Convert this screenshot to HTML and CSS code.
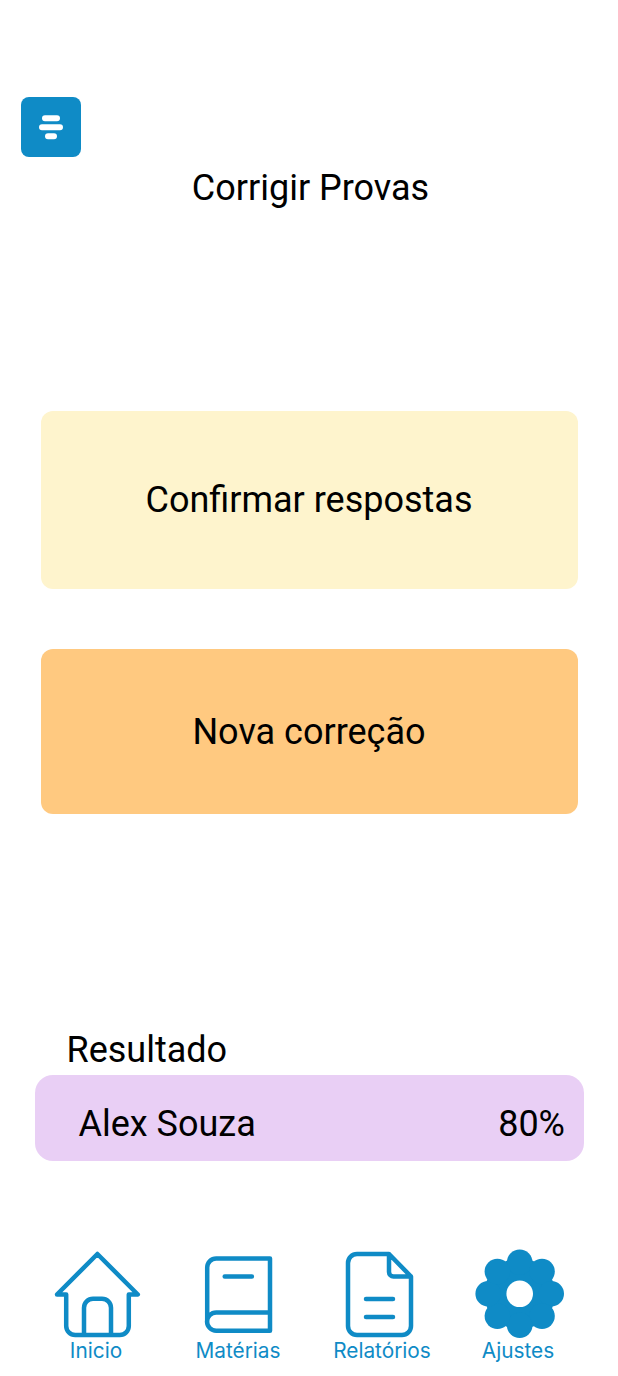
FILE: index.html
```html
<!DOCTYPE html>
<html lang="pt-BR">
<head>
<meta charset="utf-8">
<title>Corrigir Provas</title>
<link rel="stylesheet" href="styles.css">
</head>
<body>
<main class="screen">
  <header class="header">
    <button class="menu" aria-label="Menu">
      <svg class="menu-icon" viewBox="0 0 60 60"><path d="M24 21.3h12M21 30.3h18M27 39.3h6"/></svg>
    </button>
    <h1 class="title">Corrigir Provas</h1>
  </header>
  <section class="actions">
    <button class="action action-confirm">Confirmar respostas</button>
    <button class="action action-new">Nova correção</button>
  </section>
  <section class="results">
    <h2 class="results-title">Resultado</h2>
    <div class="result"><span>Alex Souza</span><span>80%</span></div>
  </section>
  <nav class="nav">
    <a class="nav-item">
      <svg class="nav-icon" viewBox="0 0 100 95"><path d="M20.2 49.5H11L51.4 9 91.8 49.5H82.8V81a9 9 0 0 1-9 9H29.2a9 9 0 0 1-9-9ZM38 90V62.7a9 9 0 0 1 9-9h9a9 9 0 0 1 9 9V90"/></svg>
      <span>Inicio</span>
    </a>
    <a class="nav-item">
      <svg class="nav-icon" viewBox="0 0 100 95"><path d="M19.2 76.5V22.4a9 9 0 0 1 9-9H82V85.7H28.2a9.15 9.15 0 0 1 0-18.3H82M36.7 31.5h27.2"/></svg>
      <span>Matérias</span>
    </a>
    <a class="nav-item">
      <svg class="nav-icon" viewBox="0 0 100 95"><path d="M57 9H25a9 9 0 0 0-9 9v63a9 9 0 0 0 9 9h45a9 9 0 0 0 9-9V31.5ZM57 9v18a4.5 4.5 0 0 0 4.5 4.5H79M34 54h27M34 72h27"/></svg>
      <span>Relatórios</span>
    </a>
    <a class="nav-item">
      <svg class="nav-icon nav-icon-solid" viewBox="0 0 100 95">
        <circle cx="51.7" cy="48.8" r="35.4"/>
        <circle cx="51.7" cy="17.3" r="12.8"/><circle cx="74" cy="26.5" r="12.8"/>
        <circle cx="83.2" cy="48.8" r="12.8"/><circle cx="74" cy="71.1" r="12.8"/>
        <circle cx="51.7" cy="80.3" r="12.8"/><circle cx="29.4" cy="71.1" r="12.8"/>
        <circle cx="20.2" cy="48.8" r="12.8"/><circle cx="29.4" cy="26.5" r="12.8"/>
        <circle class="gear-hole" cx="51.7" cy="48.8" r="13.3"/>
      </svg>
      <span>Ajustes</span>
    </a>
  </nav>
</main>
</body>
</html>
```
FILE: styles.css
```css
* { box-sizing: border-box; }
body { margin: 0; background: #fff; }
.screen {
  width: 618px;
  height: 1376px;
  padding-top: 97.4px;
  display: flex;
  flex-direction: column;
  overflow: hidden;
  color: #000;
  font: 36px/42px Roboto, sans-serif;
}
button { border: 0; padding: 0; font: inherit; color: inherit; }
h1, h2 { margin: 0; font: inherit; }
.header { display: flex; flex-direction: column; height: 313.8px; }
.menu {
  width: 60px;
  height: 60px;
  margin-left: 21px;
  border-radius: 8px;
  background: #0f8bc6;
}
.menu-icon {
  display: block;
  width: 60px;
  height: 60px;
  fill: none;
  stroke: #fff;
  stroke-width: 6;
  stroke-linecap: round;
}
.title { margin-top: 9.6px; padding-left: 3px; text-align: center; }
.actions {
  display: flex;
  flex-direction: column;
  gap: 60.3px;
  padding: 0 40.5px;
}
.action { border-radius: 12px; }
.action-confirm { height: 178px; background: #fef4cd; }
.action-new { height: 165px; background: #ffc980; }
.results { margin-top: 214.5px; padding: 0 34.5px; }
.results-title { padding-left: 32px; }
.result {
  display: flex;
  justify-content: space-between;
  height: 85.5px;
  margin-top: 4.5px;
  padding: 27.7px 18.5px 0 44px;
  border-radius: 18px;
  background: #e9cff5;
}
.nav {
  display: grid;
  grid-template-columns: 142px 142px 146px 126px;
  margin-top: 84px;
  padding-left: 25px;
  color: #0f8bc6;
  font: 400 20.8px/24px Inter, sans-serif;
}
.nav-item { display: flex; flex-direction: column; align-items: center; }
.nav-icon {
  width: 100px;
  height: 95px;
  margin-bottom: -1.4px;
  fill: none;
  stroke: #0f8bc6;
  stroke-width: 4.5;
  stroke-linecap: round;
  stroke-linejoin: round;
}
.nav-icon-solid { fill: #0f8bc6; stroke: none; }
.gear-hole { fill: #fff; }
```
